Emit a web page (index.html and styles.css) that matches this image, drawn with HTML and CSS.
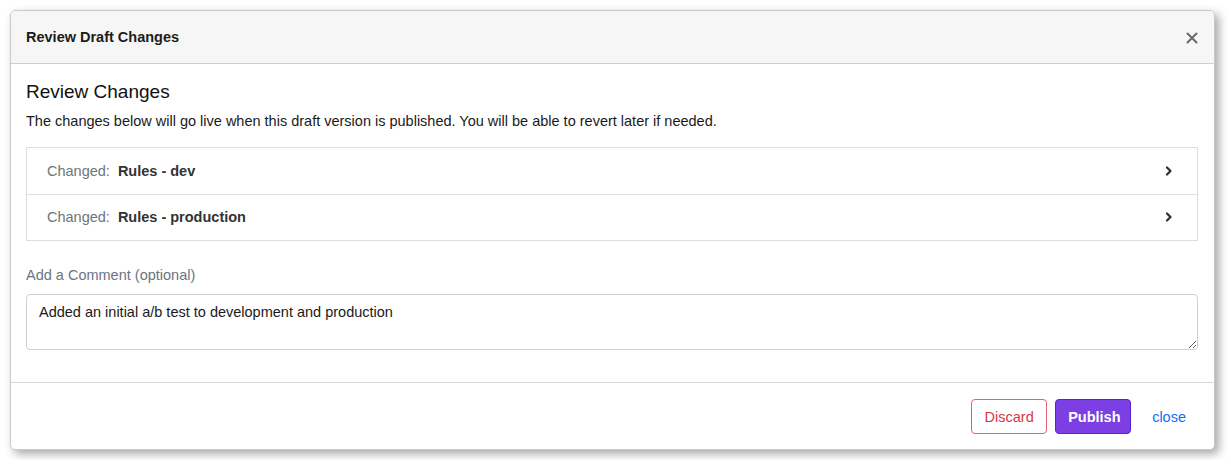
FILE: index.html
```html
<!DOCTYPE html>
<html>
<head>
<meta charset="utf-8">
<link rel="stylesheet" href="styles.css">
</head>
<body>
<div class="modal">
  <div class="modal-header">
    <div class="modal-title">Review Draft Changes</div>
    <button class="btn-close" aria-label="Close">
      <svg width="12" height="12" viewBox="0 0 12 12"><path d="M1.5 1.5 L10.5 10.5 M10.5 1.5 L1.5 10.5" stroke="#666a70" stroke-width="2" stroke-linecap="round"/></svg>
    </button>
  </div>
  <div class="modal-body">
    <h3 class="section-title">Review Changes</h3>
    <p class="lead">The changes below will go live when this draft version is published. You will be able to revert later if needed.</p>
    <div class="change-list">
      <div class="change-row">
        <span class="change-label">Changed:</span>
        <span class="change-name">Rules - dev</span>
        <svg class="chev" width="8" height="10" viewBox="0 0 8 10"><path d="M2 1.5 L5.5 5 L2 8.5" fill="none" stroke="#2a2f36" stroke-width="2.2" stroke-linecap="round" stroke-linejoin="round"/></svg>
      </div>
      <div class="change-row">
        <span class="change-label">Changed:</span>
        <span class="change-name">Rules - production</span>
        <svg class="chev" width="8" height="10" viewBox="0 0 8 10"><path d="M2 1.5 L5.5 5 L2 8.5" fill="none" stroke="#2a2f36" stroke-width="2.2" stroke-linecap="round" stroke-linejoin="round"/></svg>
      </div>
    </div>
    <label class="comment-label" for="c">Add a Comment (optional)</label>
    <textarea id="c" class="comment">Added an initial a/b test to development and production</textarea>
  </div>
  <div class="modal-footer">
    <button class="btn btn-discard">Discard</button>
    <button class="btn btn-publish">Publish</button>
    <a class="link-close" href="#">close</a>
  </div>
</div>
</body>
</html>
```
FILE: styles.css
```css
* { box-sizing: border-box; }
html, body { margin: 0; background: #fff; }
body {
  padding: 10px;
  font-family: "Liberation Sans", Arial, sans-serif;
  color: #212529;
}
.modal {
  width: 1205px;
  height: 440px;
  border: 1px solid #c9c9c9;
  border-radius: 5px;
  background: #fff;
  box-shadow: 4px 4px 10px rgba(0,0,0,0.35);
  display: flex;
  flex-direction: column;
  overflow: hidden;
}
.modal-header {
  height: 53px;
  flex: none;
  background: #f6f6f6;
  border-bottom: 1px solid #d0d0d0;
  display: flex;
  align-items: center;
  justify-content: space-between;
  padding: 0 16px 1px 15px;
}
.modal-title {
  font-size: 14.5px;
  font-weight: 700;
  color: #1c1c1c;
}
.btn-close {
  background: none;
  border: 0;
  padding: 0;
  margin-top: 3px;
  display: flex;
  cursor: pointer;
}
.modal-body {
  flex: 1;
  padding: 16px 16px 0 15px;
}
.section-title {
  margin: 0;
  font-size: 19px;
  font-weight: 500;
  line-height: 24px;
  color: #111;
}
.lead {
  margin: 7px 0 0;
  font-size: 14.5px;
  line-height: 20px;
  color: #1a1a1a;
}
.change-list {
  margin-top: 16px;
  border: 1px solid #dedede;
}
.change-row {
  height: 46px;
  display: flex;
  align-items: center;
  padding: 0 24px 1px 20px;
  font-size: 14.5px;
}
.change-row + .change-row { border-top: 1px solid #dedede; }
.change-label { color: #6c757d; }
.change-name { font-weight: 700; color: #333; margin-left: 8px; }
.chev { margin-left: auto; }
.comment-label {
  display: block;
  margin-top: 24px;
  font-size: 14.5px;
  line-height: 20px;
  color: #6c757d;
}
.comment {
  display: block;
  margin-top: 9px;
  width: 100%;
  height: 56px;
  border: 1px solid #cfcfcf;
  border-radius: 4px;
  padding: 8px 12px;
  font-family: inherit;
  font-size: 14.5px;
  line-height: 18px;
  color: #1a1a1a;
}
.modal-footer {
  height: 67px;
  flex: none;
  border-top: 1px solid #d6d6d6;
  display: flex;
  align-items: center;
  justify-content: flex-end;
  padding: 1px 28px 0 16px;
}
.btn {
  height: 35px;
  border-radius: 4px;
  font-family: inherit;
  font-size: 14.5px;
  padding: 0 12px;
  cursor: pointer;
}
.btn-discard {
  width: 76px;
  background: #fff;
  border: 1px solid #e3606c;
  color: #dc3545;
}
.btn-publish {
  width: 76px;
  margin-left: 8px;
  background: #7b3fe4;
  border: 1px solid #5a23c8;
  color: #fff;
  font-weight: 700;
}
.link-close {
  margin-left: 21px;
  color: #0d6efd;
  text-decoration: none;
  font-size: 14.5px;
}
```
